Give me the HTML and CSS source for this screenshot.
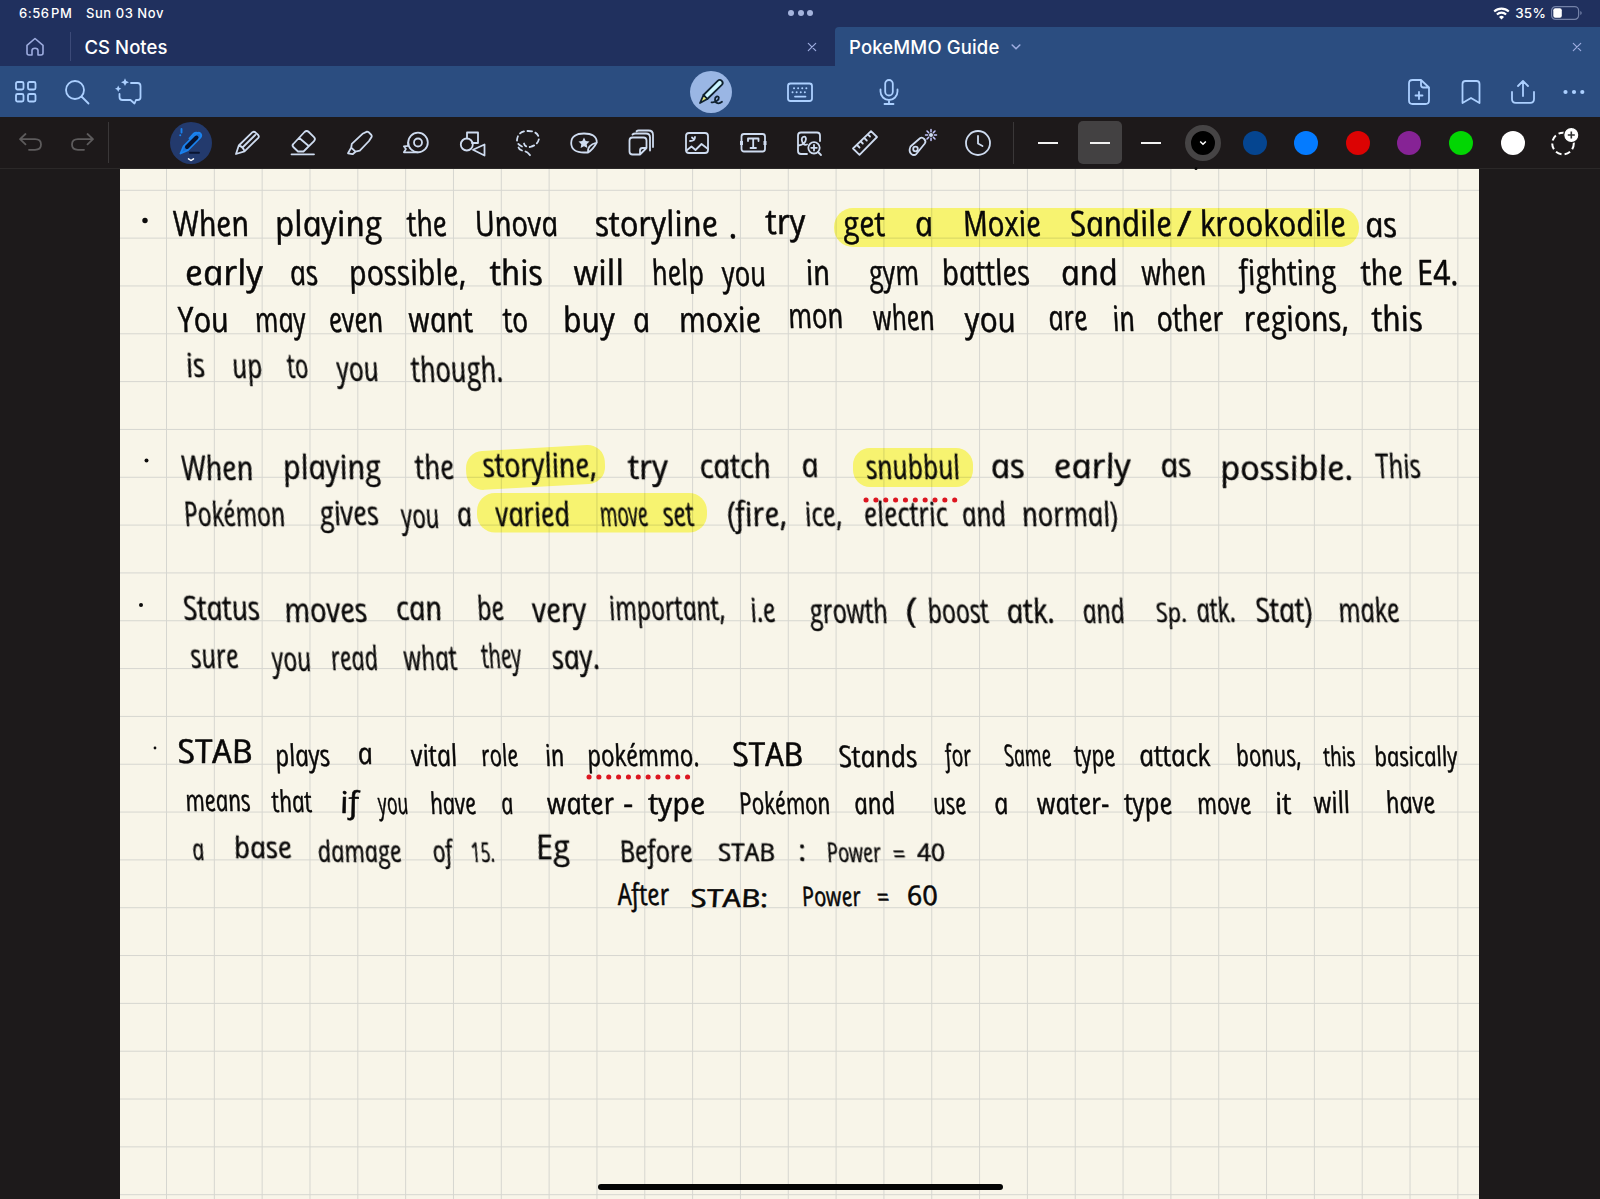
FILE: index.html
```html
<!DOCTYPE html>
<html lang="en">
<head>
<meta charset="utf-8">
<title>PokeMMO Guide</title>
<link rel="stylesheet" href="styles.css">
</head>
<body>
<div class="app">
  <header class="top">
    <div class="status">
      <div class="status-left"><span class="time">6:56 PM</span><span class="date">Sun 03 Nov</span></div>
      <div class="multitask"><i></i><i></i><i></i></div>
      <div class="status-right">
        <svg width="17" height="13" viewBox="0 0 17 13"><g fill="none" stroke="#fff" stroke-width="2.1"><path d="M1.2 4.6a10.4 10.4 0 0 1 14.6 0"/><path d="M3.9 7.5a6.5 6.5 0 0 1 9.2 0"/></g><path d="M8.500 12.500 6 9.900a3.600 3.600 0 0 1 5 0z" fill="#fff"/></svg>
        <span class="percent">35%</span>
        <svg width="31" height="14" viewBox="0 0 31 14"><rect x=".6" y=".6" width="27" height="12.800" rx="4" fill="none" stroke="#7482a8" stroke-width="1.200"/><rect x="2.300" y="2.300" width="8.500" height="9.400" rx="2" fill="#fff"/><path d="M29.300 5v4q1.400-.6 1.400-2t-1.400-2z" fill="#7482a8"/></svg>
      </div>
    </div>
    <div class="tabs">
      <div class="home"><svg width="20" height="20" viewBox="0 0 20 20"><path d="M2 8.300 10 1.500l8 6.800V16q0 2-2 2h-3v-4.500q0-2.300-3-2.300t-3 2.300V18H4q-2 0-2-2z"/></svg></div>
      <div class="tab">
        <span class="tab-name">CS Notes</span>
        <svg class="close" width="10" height="10" viewBox="0 0 10 10"><path d="M1.300 1.300l7.400 7.400M8.700 1.300 1.300 8.700"/></svg>
      </div>
      <div class="tab active">
        <span class="tab-name guide">PokeMMO Guide</span>
        <svg class="chev" width="10" height="8" viewBox="0 0 10 8"><path d="M1.200 2 5 5.800 8.800 2"/></svg>
        <svg class="close" width="10" height="10" viewBox="0 0 10 10"><path d="M1.300 1.300l7.400 7.400M8.700 1.300 1.300 8.700"/></svg>
      </div>
    </div>
  </header>

  <nav class="nav">
    <div class="group side">
      <span class="cell"><svg class="ic" viewBox="0 0 28 28"><rect x="4" y="4" width="7.500" height="7.500" rx="1.500"/><rect x="16" y="4" width="7.500" height="7.500" rx="1.500"/><rect x="4" y="16" width="7.500" height="7.500" rx="1.500"/><rect x="16" y="16" width="7.500" height="7.500" rx="1.500"/></svg></span>
      <span class="cell"><svg class="ic" viewBox="0 0 28 28"><circle cx="12" cy="12" r="9"/><path d="M18.500 18.500 25.500 25.500"/></svg></span>
      <span class="cell"><svg class="ic" viewBox="0 0 28 28"><path d="M16 5h6.500q3 0 3 3v11.500q0 2.500-3 2.500h-1.500l-1.500 3.500-4-3.500H7.500q-3 0-3-3v-3"/><path class="solid" d="M10 .3 11.200 3 14 4.200 11.200 5.400 10 8.100 8.800 5.400 6 4.200 8.800 3zM3.200 7.500l1 2.200 2.200 1-2.200 1-1 2.200-1-2.200-2.200-1 2.200-1z"/></svg></span>
    </div>
    <div class="group modes">
      <span class="cell"><span class="mode-on"><svg class="ic" viewBox="0 0 28 28"><path class="pen-body" d="M6.500 17 20.700 2.800a2.900 2.900 0 0 1 4.100 4.100L10.300 21z"/><path class="pen-tip" d="M6.500 17 3 25 10.300 21z"/><path d="M14.500 24.300C18 25 22.300 22 21.800 19.600C21 17.300 17.800 18.500 18 21.700C18.200 25.800 22 26.300 25 23.800"/></svg></span></span>
      <span class="cell"><svg class="ic" viewBox="0 0 28 28"><rect x="2" y="5.500" width="24" height="17.500" rx="2.500"/><path d="M9 18.600h10.500"/><path class="keys" d="M8 10.300h14M6.500 14.200h16"/></svg></span>
      <span class="cell"><svg class="ic" viewBox="0 0 28 28"><rect x="10.200" y="2" width="7.600" height="15.500" rx="3.800"/><path d="M5.500 11.500v2a8.500 8.500 0 0 0 17 0v-2M14 22v4M9.500 26h9"/></svg></span>
    </div>
    <div class="group side end">
      <span class="cell"><svg class="ic" viewBox="0 0 28 28"><path d="M16 2H7.500Q4 2 4 5.500v17Q4 26 7.500 26h13q3.500 0 3.500-3.500V9.500zM16 2v5q0 2.500 2.500 2.500H24M14 14v7M10.500 17.500h7"/></svg></span>
      <span class="cell"><svg class="ic" viewBox="0 0 28 28"><path d="M5.500 25V6q0-3 3-3h11q3 0 3 3v19L14 20z"/></svg></span>
      <span class="cell"><svg class="ic" viewBox="0 0 28 28"><path d="M14 18V3M9 8l5-5 5 5M3 14v7q0 3.800 3.800 3.800h14.400q3.800 0 3.800-3.800v-7"/></svg></span>
      <span class="cell"><svg class="ic" viewBox="0 0 28 28"><g class="solid"><circle cx="5.500" cy="14" r="2.100"/><circle cx="14" cy="14" r="2.100"/><circle cx="22.300" cy="14" r="2.100"/></g></svg></span>
    </div>
  </nav>

  <div class="tools">
    <div class="history">
      <svg class="ic dim" viewBox="0 0 28 28"><path d="M8.500 5 3 10.200l5.500 5.200M3.500 10.200h14.500q6 0 6 5.300t-6 5.300h-6"/></svg>
      <svg class="ic dim" viewBox="0 0 28 28"><path d="M19.500 5 25 10.200l-5.500 5.200M24.500 10.200H10q-6 0-6 5.300t6 5.300h6"/></svg>
    </div>
    <div class="kit">
      <span class="tool-on"><svg width="42" height="42" viewBox="0 0 42 42"><path class="barrel" d="M13.500 24.500 26 12q2.500-2.200 4.300-.5t0 4.200L17.500 28.500 10.500 31.500z"/><path class="clip" d="M19.500 16.500 24 11.500q1.500-1.200 3.500-.5M11.500 7v3.500M10.200 13.200h.1"/><path class="grip" d="M17 25 26.500 15.500"/><path class="under" d="M20 30.800h9"/><path class="caret" d="M18.500 36.800 21 38.500l2.500-1.700"/></svg></span>
      <svg class="ic" viewBox="0 0 28 28"><path d="M3 25 5.800 16.500 19.500 3.200q1.500-1 2.800.1l2.900 2.700q1.200 1.400.1 2.800L11.500 22.300zM5.800 16.500q4.200 1 5.700 5.800M9.500 18.500 22.200 6"/></svg>
      <svg class="ic" viewBox="0 0 28 28"><path d="M2.500 25.300h22.500M10 22.500H9L4.300 18q-1.500-1.500 0-3L15.500 3q2.200-2 4.300 0l5.200 5.100q2 2 0 4L14.500 22.500zM10 8.800 20 17.200"/></svg>
      <svg class="ic" viewBox="0 0 28 28"><path d="M5.800 14.800 16.500 4.800 21 2.600q1 0 1.600.6L25.400 6q.6.700.3 1.700L23 12 13.800 21.700 9.500 22.700 5.200 18.600zM5.200 18.600 2 24.300l4.600.9 2.900-2.500"/></svg>
      <svg class="ic" viewBox="0 0 28 28"><circle cx="16" cy="13.500" r="9.800"/><circle cx="16" cy="13.500" r="4"/><path d="M6.200 13.500v3.300l-4.300.5 2 2.800-2 3.200H16"/></svg>
      <svg class="ic" viewBox="0 0 28 28"><path d="M9 9V3.500h11V14h-6"/><circle cx="8.800" cy="15.500" r="6"/><path d="M26.500 15.500v11L15 20.800z"/></svg>
      <svg class="ic" viewBox="0 0 28 28"><path class="dash" d="M8 17.500Q3 15.500 3 11 4 2 14 2t11 7.500Q24 16 16 18q-5 .3-6-3.500"/><path d="M4.500 18.500q.5 2 3.500 3M11.500 22.500l2 1 2.500 2.700"/></svg>
      <svg class="ic" viewBox="0 0 28 28"><path d="M26.800 13.500C26.800 7 21.500 4.500 14 4.500S1.200 7.500 1.200 14 6.500 23.500 14 23.500h4q5-3 8.800-10zM18 23.500q-1-7.500 8.800-10"/><path class="solid" d="M14 8.500l1.700 3.500 3.800.5-2.800 2.700.7 3.800-3.400-1.800-3.400 1.800.7-3.800-2.800-2.700 3.800-.5z"/></svg>
      <svg class="ic" viewBox="0 0 28 28"><path d="M13 25.500H5.500q-3 0-3-3V11.500q0-3 3-3h11q3 0 3 3V19zM13 25.500V21.500q0-2.500 2.500-2.500h4M5.500 5.500q1-1 3-1h10.500q4 0 4 4v13M9.500 2.200q1-.7 2-.7h10q4.500 0 4.500 4.500V18"/></svg>
      <svg class="ic" viewBox="0 0 28 28"><rect x="3" y="4" width="22" height="20" rx="3"/><path d="M3.500 21.500 8.500 17.500l4 3.500 6-6 6.500 5M7 12q5 0 5-4M9 8.500l2 2"/></svg>
      <svg class="ic" viewBox="0 0 28 28"><rect x="2.500" y="5" width="23.500" height="17.500" rx="2.500"/><path d="M9 12V9.500h10.500V12M14.200 9.500v9.500M11.500 19h5.500"/><path class="solid" d="M1 12h3v4H1zM24.500 12h3v4h-3z"/></svg>
      <svg class="ic" viewBox="0 0 28 28"><path d="M12 25H6q-3 0-3-3V6.500q0-3 3-3h16q3 0 3 3V12M3.500 16.500q7-1 7.500-6.500-.5-3.500-3-2t0 6.500q2 2 4 1"/><circle cx="19" cy="18.800" r="5.700"/><path d="M23 23l3 3M19 16v5.600M16.200 18.800h5.600"/></svg>
      <svg class="ic" viewBox="0 0 28 28"><path d="M2 19.500 20 2.200l6 5.800L8.500 25.800zM6 16l2.500 2.500M9.800 12.500l2 2M13.300 9l2.500 2.500M17 5.500l2 2"/></svg>
      <svg class="ic" viewBox="0 0 28 28"><path d="M2.500 17.500 12 9.300q2-1.500 4.200.7t.6 4.500L8.500 24.800q-2.500 2.500-5.300 0t-.7-7.300z"/><circle cx="7.500" cy="20" r="2.300"/><path class="rays" d="M23 .5v2.200M23 9.300v2.200M17.500 6h2.200M26.300 6h2.200M19 2l1.600 1.600M25.400 8.400 27 10M27 2l-1.600 1.600M20.600 8.400 19 10"/><circle class="solid" cx="23" cy="6" r="2"/></svg>
      <svg class="ic" viewBox="0 0 28 28"><circle cx="14" cy="14" r="12"/><path d="M14 7v7.500l4.500 2.500"/></svg>
    </div>
    <div class="swatches">
      <span><i class="line"></i></span><span class="sel"><i class="line"></i></span><span><i class="line"></i></span>
      <span><i class="dot black"><svg width="8" height="6" viewBox="0 0 8 6"><path d="M1.200 1.500 4 4.300 6.800 1.500"/></svg></i></span>
      <span><i class="dot navyblue"></i></span><span><i class="dot azure"></i></span><span><i class="dot red"></i></span><span><i class="dot purple"></i></span><span><i class="dot green"></i></span><span><i class="dot white"></i></span>
      <span><svg width="30" height="30" viewBox="0 0 30 30"><circle cx="14" cy="15.500" r="10.800" fill="none" stroke="#fff" stroke-width="2" stroke-dasharray="6 3.200"/><circle cx="22.300" cy="7" r="7.600" fill="#fff" stroke="#1d1a1a" stroke-width="1.200"/><path d="M22.300 3.500v7M18.800 7h7" stroke="#333" stroke-width="1.600"/></svg></span>
    </div>
  </div>

  <main class="desk">
    <div class="paper">
      <svg class="ink" width="1360" height="1030" viewBox="119 169 1360 1030">
        <g class="marker">
          <rect x="834" y="208" width="525" height="39" rx="19"/>
          <rect x="466" y="448" width="139" height="39" rx="17" transform="rotate(-3.200 535 467)"/>
          <rect x="853" y="448" width="120" height="39" rx="17"/>
          <rect x="477" y="493" width="230" height="39.500" rx="18"/>
        </g>
        <g class="bullets"><circle cx="145" cy="220.500" r="2.700"/><circle cx="146.500" cy="460.500" r="2"/><circle cx="141" cy="605" r="2"/><circle cx="155" cy="748" r="1.400"/><circle cx="1196" cy="168.500" r="1.500"/></g>
        <g class="dots"><path d="M866 500H956"/><path d="M589 777H690"/></g>

        <g class="l big" transform="translate(2 236) skewX(12)"><text x="173" textLength="76">When</text><text x="275" textLength="107">playing</text><text x="407" textLength="40">the</text><text x="475" textLength="83">Unova</text><text x="595" textLength="123">storyline</text><text x="728" y="2">.</text><text x="766" y="-2" textLength="40">try</text><text x="843" textLength="42">get</text><text x="915" textLength="18">a</text><text x="963" textLength="78">Moxie</text><text x="1070" textLength="102">Sandile</text><text x="1177" textLength="14">/</text><text x="1200" textLength="146">krookodile</text><text x="1365" y="1" textLength="32">as</text></g>
        <g class="l big" transform="translate(1 285) skewX(12)"><text x="186" textLength="78">early</text><text x="291" textLength="28">as</text><text x="350" textLength="117">possible,</text><text x="491" textLength="53">this</text><text x="575" textLength="50">will</text><text x="653" textLength="52">help</text><text x="723" y="1" textLength="44">you</text><text x="807" textLength="24">in</text><text x="870" textLength="50">gym</text><text x="943" textLength="88">battles</text><text x="1062" textLength="57">and</text><text x="1143" textLength="64">when</text><text x="1240" textLength="97">fighting</text><text x="1362" textLength="42">the</text><text x="1418" textLength="41">E4.</text></g>
        <g class="l big" transform="translate(2 332) skewX(12)"><text x="178" textLength="51">You</text><text x="255" textLength="51">may</text><text x="329" textLength="54">even</text><text x="409" textLength="64">want</text><text x="503" textLength="25">to</text><text x="563" textLength="52">buy</text><text x="633" textLength="17">a</text><text x="679" textLength="82">moxie</text><text x="789" y="-4" textLength="55">mon</text><text x="874" y="-2" textLength="61">when</text><text x="965" textLength="51">you</text><text x="1049" y="-2" textLength="39">are</text><text x="1113" y="-1" textLength="22">in</text><text x="1157" y="-1" textLength="67">other</text><text x="1244" y="-1" textLength="105">regions,</text><text x="1372" y="-1" textLength="51">this</text></g>
        <g class="l" transform="translate(1.500 379) skewX(12)"><text x="187" y="-2" textLength="19">is</text><text x="233" y="-1" textLength="30">up</text><text x="288" y="-1" textLength="21">to</text><text x="337" y="2" textLength="42">you</text><text class="big" x="411" y="3" textLength="92">though.</text></g>

        <g class="l" transform="translate(2 479) skewX(12)"><text x="181" y="1" textLength="72">When</text><text x="283" textLength="98">playing</text><text x="415" textLength="39">the</text><text x="483" y="-2" textLength="114">storyline,</text><text x="628" textLength="40">try</text><text x="700" y="-1" textLength="71">catch</text><text x="802" y="-2" textLength="17">a</text><text x="866" textLength="94">snubbul</text><text x="991" y="-1" textLength="34">as</text><text x="1054" y="-1" textLength="77">early</text><text x="1161" y="-2" textLength="31">as</text><text x="1220" y="1" textLength="133">possible.</text><text x="1376" y="-1" textLength="45">This</text></g>
        <g class="l" transform="translate(2 526) skewX(12)"><text x="184" textLength="101">Pokémon</text><text x="320" y="-1" textLength="59">gives</text><text x="401" y="2" textLength="38">you</text><text x="457" textLength="15">a</text><text x="496" textLength="74">varied</text><text x="600" textLength="48">move</text><text x="663" textLength="31">set</text><text x="727" textLength="60">(fire,</text><text x="805" textLength="37">ice,</text><text x="864" textLength="84">electric</text><text x="962" textLength="44">and</text><text x="1022" textLength="96">normal)</text></g>

        <g class="l" transform="translate(1.500 622) skewX(12)"><text x="184" y="-2" textLength="77">Status</text><text x="285" textLength="83">moves</text><text x="397" y="-2" textLength="46">can</text><text x="478" y="-2" textLength="27">be</text><text x="533" textLength="54">very</text><text x="610" y="-2" textLength="116">important,</text><text x="751" textLength="25">i.e</text><text x="810" y="1" textLength="78">growth</text><text x="906" textLength="11">(</text><text x="928" y="1" textLength="61">boost</text><text x="1007" y="1" textLength="48">atk.</text><text x="1083" y="1" textLength="42">and</text><text class="small" x="1156" textLength="31">Sp.</text><text x="1197" textLength="39">atk.</text><text x="1256" textLength="57">Stat)</text><text x="1339" textLength="61">make</text></g>
        <g class="l" transform="translate(2 670) skewX(12)"><text x="191" y="-2" textLength="48">sure</text><text x="272" y="1" textLength="39">you</text><text x="331" textLength="47">read</text><text x="404" textLength="53">what</text><text x="482" y="-2" textLength="40">they</text><text x="552" y="-1" textLength="48">say.</text></g>

        <g class="l mid" transform="translate(2 766) skewX(12)"><text class="caps" x="178" y="-3" textLength="75">STAB</text><text x="275" textLength="55">plays</text><text x="358" y="-2" textLength="15">a</text><text x="411" textLength="46">vital</text><text x="481" textLength="37">role</text><text x="545" textLength="19">in</text><text x="587" textLength="112">pokémmo.</text><text class="caps" x="732" textLength="71">STAB</text><text x="838" y="1" textLength="79">Stands</text><text x="945" textLength="26">for</text><text x="1004" textLength="47">Same</text><text x="1074" textLength="41">type</text><text x="1139" textLength="71">attack</text><text x="1236" textLength="65">bonus,</text><text class="small" x="1323" textLength="32">this</text><text class="small" x="1374" textLength="83">basically</text></g>
        <g class="l mid" transform="translate(2 814) skewX(12)"><text x="186" y="-3" textLength="65">means</text><text x="272" y="-2" textLength="40">that</text><text x="340" y="-1" textLength="19">if</text><text x="378" textLength="30">you</text><text x="430" textLength="46">have</text><text x="501" textLength="12">a</text><text x="547" textLength="67">water</text><text x="623" textLength="10">-</text><text x="648" textLength="57">type</text><text x="739" textLength="91">Pokémon</text><text x="854" textLength="41">and</text><text x="933" textLength="33">use</text><text x="994" textLength="14">a</text><text x="1037" textLength="72">water-</text><text x="1124" textLength="48">type</text><text x="1197" textLength="54">move</text><text x="1275" textLength="16">it</text><text x="1314" y="-1" textLength="36">will</text><text x="1386" y="-1" textLength="49">have</text></g>
        <g class="l mid" transform="translate(1.500 862) skewX(12)"><text x="193" y="-2" textLength="12">a</text><text x="235" y="-4" textLength="58">base</text><text x="318" textLength="84">damage</text><text x="433" textLength="20">of</text><text class="small" x="471" textLength="24">15.</text><text class="caps" x="537" y="-3" textLength="34">Eg</text><text x="620" textLength="73">Before</text><text class="tiny" x="718" y="-1" textLength="57">STAB</text><text x="799" y="-1">:</text><text class="small" x="827" textLength="54">Power</text><text class="tiny" x="893" y="1" textLength="12">=</text><text class="tiny" x="917" y="-1" textLength="28">40</text></g>
        <g class="l mid" transform="translate(1.500 906) skewX(12)"><text x="618" y="-1" textLength="52">After</text><text class="tiny" x="690" y="1" textLength="78">STAB:</text><text class="small" x="802" textLength="59">Power</text><text class="tiny" x="877" textLength="12">=</text><text class="small" x="907" y="-1" textLength="31">60</text></g>
      </svg>
      <div class="home-bar"></div>
    </div>
  </main>
</div>
<script>
document.querySelectorAll('.ink text[textLength]').forEach(function (t) {
  t.setAttribute('lengthAdjust', 'spacingAndGlyphs');
});
</script>
</body>
</html>
```
FILE: styles.css
```css
* { box-sizing: border-box; }
body { margin: 0; background: #1d1a1b; font-family: Inter, "Liberation Sans", sans-serif; }
.app { width: 1600px; height: 1199px; display: flex; flex-direction: column; overflow: hidden; }
svg { display: block; flex: none; overflow: visible; }

.top { height: 66px; background: #20305e; color: #fff; }
.status { height: 27px; display: grid; grid-template-columns: 1fr auto 1fr; align-items: center; padding: 0 18px 1px 19px; font-size: 13px; font-weight: 500; }
.status-left { display: flex; gap: 12px; }
.time { width: 55px; letter-spacing: .55px; word-spacing: -2.500px; white-space: nowrap; }
.date { letter-spacing: .55px; white-space: nowrap; }
.multitask { display: flex; gap: 3.500px; }
.multitask i { width: 6px; height: 6px; border-radius: 50%; background: #a5b4dd; }
.status-right { display: flex; justify-content: flex-end; align-items: center; gap: 5px; }
.percent { font-size: 13.500px; letter-spacing: .2px; }

.tabs { height: 39px; display: flex; }
.home { width: 71px; margin: 5px 0; height: 29px; display: flex; align-items: center; padding-left: 25px; border-right: 1px solid #3c4a78; }
.home path, .close path, .chev path { fill: none; stroke: #9dacdf; stroke-width: 1.600; stroke-linecap: round; stroke-linejoin: round; }
.close path { stroke-width: 1.200; }
.tab { width: 764px; display: flex; align-items: center; padding: 0 18px 0 13.500px; }
.tab.active { width: 765px; background: #2b4d80; border-top-left-radius: 4px; padding: 0 18px 0 14px; }
.tab-name { font-size: 18.500px; font-weight: 500; letter-spacing: .05px; white-space: nowrap; }
.guide { width: 153px; letter-spacing: .15px; }
.chev { margin-left: 9px; }
.close { margin-left: auto; }

.nav { height: 51px; background: #2b4d80; display: grid; grid-template-columns: 1fr 267px 1fr; align-items: center; }
.group { display: flex; align-items: center; }
.cell { width: 51.600px; display: flex; justify-content: center; }
.modes .cell { width: 89px; }
.end { justify-content: flex-end; }
.ic { width: 28px; height: 28px; fill: none; stroke: #acd0ff; stroke-width: 1.800; stroke-linecap: round; stroke-linejoin: round; }
.ic .solid { fill: #acd0ff; stroke: none; }
.keys { stroke-dasharray: .1 4; stroke-width: 1.900; }
.mode-on { width: 42px; height: 42px; border-radius: 50%; background: #9ab6e4; display: flex; align-items: center; justify-content: center; }
.mode-on path { stroke: #10212f; stroke-width: 1.800; }
.mode-on .pen-body { fill: #c9f4ff; }
.mode-on .pen-tip { fill: #e4e87c; }

.tools { height: 52px; background: #1d191a; display: flex; align-items: center; border-bottom: 1px solid #2b2828; }
.history { width: 109px; height: 41px; display: flex; align-items: center; gap: 23px; padding-left: 17px; border-right: 1px solid #3a3738; }
.kit { display: grid; grid-template-columns: repeat(15, 56.200px); justify-items: center; align-items: center; width: 905px; height: 42px; padding-left: 54px; border-right: 1px solid #3a3738; }
.tools .ic { stroke: #cfdcf0; }
.tools .ic .solid { fill: #cfdcf0; }
.tools .ic.dim { stroke: #5d5b5c; }
.tool-on { width: 42px; height: 42px; border-radius: 50%; background: #233a6d; }
.tool-on path { fill: none; stroke-linecap: round; stroke-linejoin: round; stroke: #1a82ee; stroke-width: 1.900; }
.tool-on .barrel { fill: #1c6fd0; }
.tool-on .grip { stroke: #071330; stroke-width: 4; }
.tool-on .under { stroke: #0a1430; }
.tool-on .caret { stroke: #fff; stroke-width: 1.500; }
.dash { stroke-dasharray: 4.500 3.500; }
.ic .rays { stroke: #c5c7ff; stroke-width: 1.500; }

.swatches { display: grid; grid-template-columns: repeat(11, 51.600px); margin-left: 8.500px; }
.swatches span { height: 43px; display: flex; align-items: center; justify-content: center; }
.swatches .sel { background: #434142; border-radius: 5px; margin: 0 4px; }
.line { width: 20px; height: 2px; background: #f2f2f2; }
.dot { width: 24px; height: 24px; border-radius: 50%; }
.black { width: 36px; height: 36px; background: #000; border: 6px solid #464445; display: flex; align-items: center; justify-content: center; }
.black path { fill: none; stroke: #fff; stroke-width: 1.500; }
.navyblue { background: #054590; }
.azure { background: #047bff; }
.red { background: #dc0303; }
.purple { background: #862395; }
.green { background: #02d603; }
.white { background: #fff; }

.desk { flex: 1; background: #1d1a1b; display: flex; padding-left: 119.500px; }
.paper {
  width: 1359.500px; height: 1030px; position: relative; background-color: #f8f5e9;
  background-image: linear-gradient(90deg, #d6d6d0 1.400px, transparent 1.400px), linear-gradient(#d6d6d0 1.400px, transparent 1.400px);
  background-size: 47.830px 47.830px; background-position: 46px 20.800px;
}
.ink { margin-left: -.5px; }
.marker { fill: #fefd7a; mix-blend-mode: multiply; }
.bullets { fill: #0c0b0b; }
.dots path { fill: none; stroke: #dc1620; stroke-width: 5; stroke-linecap: round; stroke-dasharray: .1 9.750; }
.l { font-family: "Open Sans", "Noto Sans", sans-serif; font-style: italic; font-size: 33px; fill: #090808; stroke: #090808; stroke-width: .5; stroke-linejoin: round; }
.big { font-size: 35px; }
.mid { font-size: 30px; }
.mid .caps { font-size: 33px; }
.l .small { font-size: 27px; }
.l .tiny { font-size: 25px; }
.home-bar { position: absolute; left: 478px; bottom: 9px; width: 405px; height: 6px; border-radius: 3px; background: #050505; }
```
